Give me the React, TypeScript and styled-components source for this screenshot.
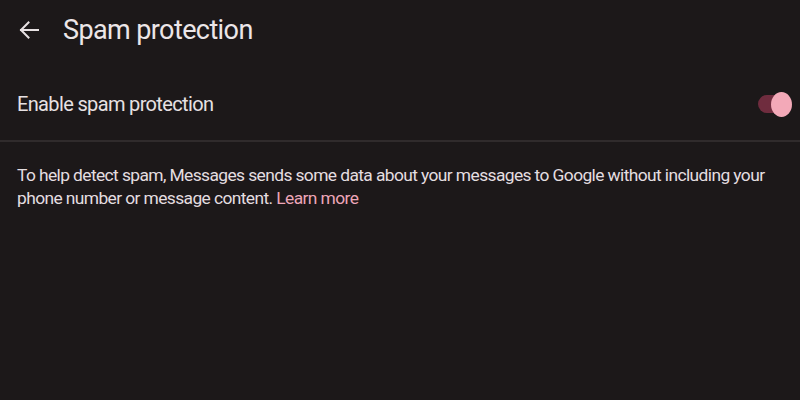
import React from "react";
import styled, { createGlobalStyle } from "styled-components";

const Global = createGlobalStyle`
  html, body { margin: 0; padding: 0; background: #1c1819; }
  body { font-family: Roboto, "Noto Sans", sans-serif; color: #e7e1e3; }
`;

const Page = styled.div`
  width: 800px;
  height: 400px;
  background: #1c1819;
  display: flex;
  flex-direction: column;
  overflow: hidden;
`;

const TopBar = styled.div`
  display: flex;
  align-items: center;
  height: 60px;
  padding-left: 18px;
  gap: 23px;
`;

const BackButton = styled.div`
  width: 22px;
  height: 22px;
  display: flex;
  align-items: center;
  justify-content: center;
  color: #e7e1e3;
`;

const Title = styled.h1`
  margin: 0;
  font-family: Roboto, "Open Sans", sans-serif;
  font-weight: 400;
  font-size: 27px;
  letter-spacing: -0.6px;
  color: #ece6e8;
`;

const Row = styled.div`
  display: flex;
  align-items: center;
  justify-content: space-between;
  height: 80px;
  box-sizing: border-box;
  padding: 8px 8px 0 17px;
`;

const RowLabel = styled.span`
  font-size: 20px;
  letter-spacing: -0.65px;
  color: #e7e1e3;
`;

const Toggle = styled.div`
  position: relative;
  width: 34px;
  height: 25px;
  display: flex;
  align-items: center;
`;

const Track = styled.div`
  width: 28px;
  height: 18px;
  border-radius: 9px;
  background: #6f2c3e;
`;

const Thumb = styled.div`
  position: absolute;
  right: 0;
  top: 0;
  width: 21px;
  height: 25px;
  border-radius: 50%;
  background: #f3a9b8;
`;

const Divider = styled.div`
  height: 2px;
  background: #302b2c;
`;

const Description = styled.p`
  margin: 22px 17px 0 17px;
  font-size: 17.4px;
  line-height: 23px;
  letter-spacing: -0.6px;
  color: #e4dee0;
`;

const Link = styled.span`
  color: #eda6b8;
`;

export default function App() {
  return (
    <>
      <Global />
      <Page>
        <TopBar>
          <BackButton>
            <svg width="20" height="18" viewBox="0 0 20 18" fill="none">
              <path d="M19 9H2M9.5 1.5L2 9l7.5 7.5" stroke="#e7e1e3" strokeWidth="2" strokeLinecap="square" />
            </svg>
          </BackButton>
          <Title>Spam protection</Title>
        </TopBar>
        <Row>
          <RowLabel>Enable spam protection</RowLabel>
          <Toggle>
            <Track />
            <Thumb />
          </Toggle>
        </Row>
        <Divider />
        <Description>
          To help detect spam, Messages sends some data about your messages to Google without including your
          phone number or message content. <Link>Learn more</Link>
        </Description>
      </Page>
    </>
  );
}
